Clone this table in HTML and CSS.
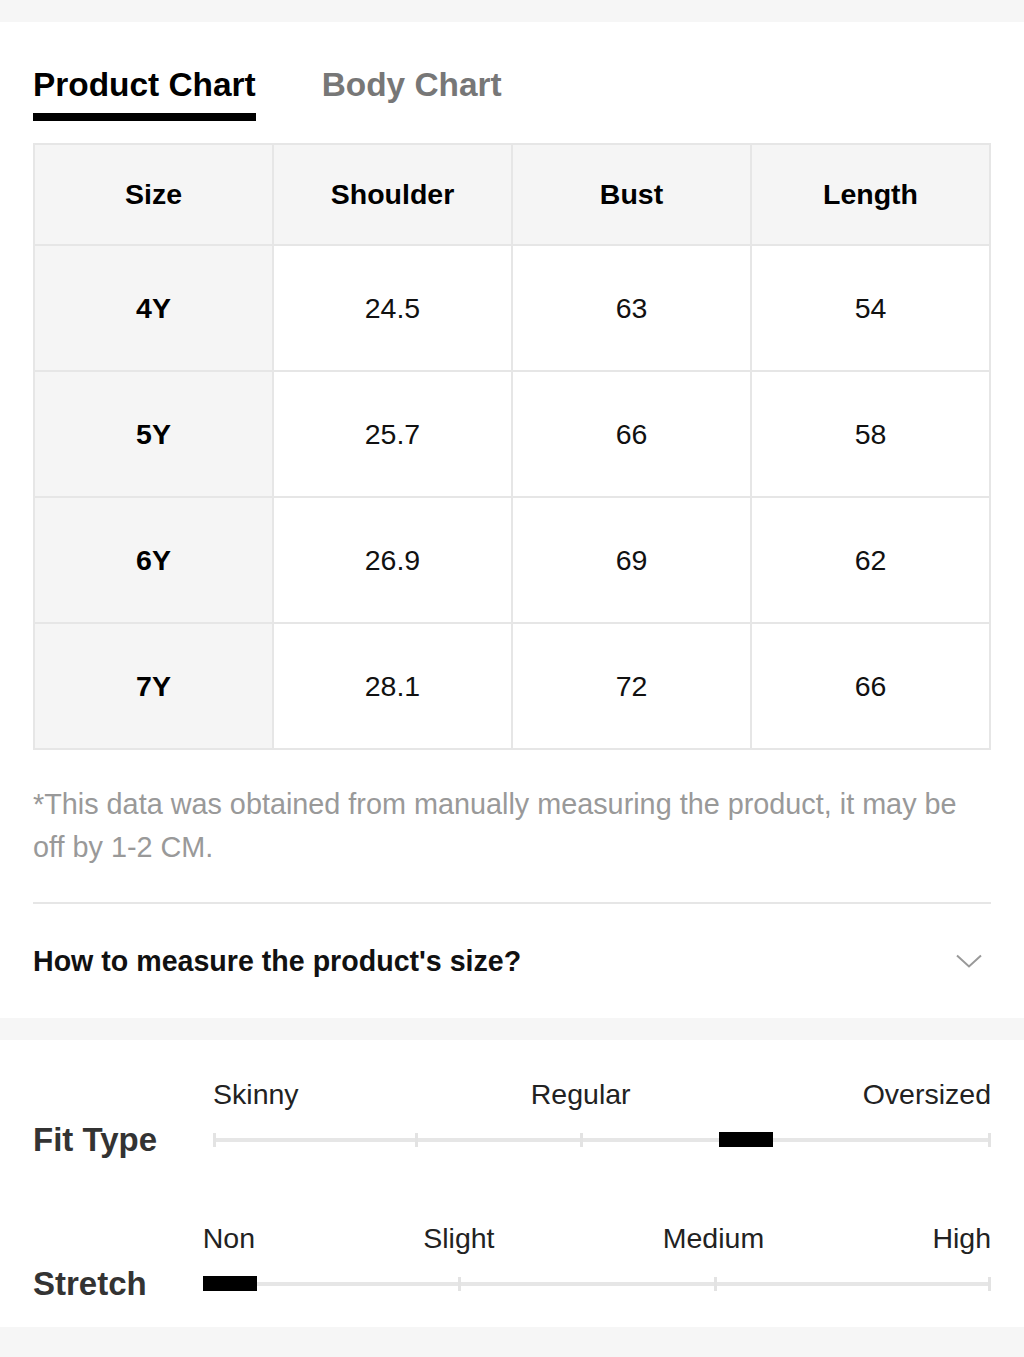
FILE: index.html
```html
<!DOCTYPE html>
<html lang="en">
<head>
<meta charset="utf-8">
<title>Size chart</title>
<link rel="stylesheet" href="styles.css">
</head>
<body>
<div class="band band-top"></div>
<section class="card">
  <div class="tabs">
    <div class="tab tab-active">Product Chart</div>
    <div class="tab">Body Chart</div>
  </div>
  <div class="table">
    <div class="cell head">Size</div>
    <div class="cell head">Shoulder</div>
    <div class="cell head">Bust</div>
    <div class="cell head">Length</div>

    <div class="cell size">4Y</div>
    <div class="cell">24.5</div>
    <div class="cell">63</div>
    <div class="cell">54</div>

    <div class="cell size">5Y</div>
    <div class="cell">25.7</div>
    <div class="cell">66</div>
    <div class="cell">58</div>

    <div class="cell size">6Y</div>
    <div class="cell">26.9</div>
    <div class="cell">69</div>
    <div class="cell">62</div>

    <div class="cell size">7Y</div>
    <div class="cell">28.1</div>
    <div class="cell">72</div>
    <div class="cell">66</div>
  </div>
  <p class="note">*This data was obtained from manually measuring the product, it may be off by 1-2 CM.</p>
  <div class="measure">
    <span class="measure-text">How to measure the product's size?</span>
    <svg class="chevron" width="26" height="14" viewBox="0 0 26 14" aria-hidden="true">
      <path d="M1 1.5 L13 12.5 L25 1.5" fill="none" stroke="#999" stroke-width="2"/>
    </svg>
  </div>
</section>
<div class="band band-mid"></div>
<section class="fit">
  <div class="scale">
    <div></div>
    <div class="labels">
      <span>Skinny</span><span>Regular</span><span>Oversized</span>
    </div>
    <div class="scale-title">Fit Type</div>
    <div class="track">
      <div class="bar"></div>
      <span class="tick" style="left:0"></span>
      <span class="tick" style="left:25.9%"></span>
      <span class="tick" style="left:47.2%"></span>
      <span class="tick tick-end"></span>
      <span class="thumb" style="left:506px"></span>
    </div>
  </div>
  <div class="scale scale-stretch">
    <div></div>
    <div class="labels">
      <span>Non</span><span>Slight</span><span>Medium</span><span>High</span>
    </div>
    <div class="scale-title">Stretch</div>
    <div class="track">
      <div class="bar"></div>
      <span class="tick" style="left:32.4%"></span>
      <span class="tick" style="left:64.8%"></span>
      <span class="tick tick-end"></span>
      <span class="thumb" style="left:0"></span>
    </div>
  </div>
</section>
<div class="band band-bottom"></div>
</body>
</html>
```

FILE: styles.css
```css
* {
  box-sizing: border-box;
}

html, body {
  margin: 0;
  padding: 0;
  background: #ffffff;
}

body {
  font-family: "Liberation Sans", Arial, Helvetica, sans-serif;
  color: #000;
  width: 1024px;
}

.band {
  background: #f6f6f6;
}

.band-top {
  height: 22px;
}

.band-mid {
  height: 22px;
}

.band-bottom {
  height: 30px;
}

.card {
  padding: 46px 33px 0;
}

.tabs {
  display: flex;
  gap: 66px;
}

.tab {
  font-size: 33.4px;
  font-weight: 700;
  line-height: 33px;
  color: #777;
  padding-bottom: 12px;
  border-bottom: 8px solid transparent;
}

.tab-active {
  color: #000;
  border-bottom-color: #000;
}

.table {
  margin-top: 22px;
  display: grid;
  grid-template-columns: repeat(4, 1fr);
  border-top: 2px solid #e6e6e6;
  border-left: 2px solid #e6e6e6;
}

.cell {
  height: 126px;
  border-right: 2px solid #e6e6e6;
  border-bottom: 2px solid #e6e6e6;
  display: flex;
  align-items: center;
  justify-content: center;
  font-size: 28.5px;
  color: #111;
}

.cell.head {
  height: 101px;
  background: #f5f5f5;
  font-weight: 700;
  color: #000;
}

.cell.size {
  background: #f5f5f5;
  font-weight: 700;
  color: #000;
}

.note {
  margin: 33px 0 33px;
  font-size: 28.8px;
  line-height: 43px;
  color: #999;
}

.measure {
  height: 116px;
  border-top: 2px solid #e6e6e6;
  display: flex;
  align-items: center;
  justify-content: space-between;
}

.measure-text {
  font-size: 28.6px;
  font-weight: 700;
  color: #111;
}

.chevron {
  margin-right: 9px;
}

.fit {
  padding: 37px 33px 31px;
}

.scale {
  display: grid;
  grid-template-columns: auto 1fr;
  column-gap: 56px;
  row-gap: 17px;
  align-items: center;
}

.scale-stretch {
  margin-top: 69px;
}

.labels {
  display: flex;
  justify-content: space-between;
  font-size: 28.5px;
  line-height: 34px;
  color: #222;
}

.scale-title {
  font-size: 33px;
  font-weight: 700;
  line-height: 24px;
  color: #333;
}

.track {
  position: relative;
  height: 24px;
  display: flex;
  align-items: center;
}

.bar {
  width: 100%;
  height: 4px;
  background: #e6e6e6;
}

.tick {
  position: absolute;
  top: 5px;
  width: 3px;
  height: 14px;
  background: #e3e3e3;
}

.tick-end {
  right: 0;
}

.thumb {
  position: absolute;
  top: 4px;
  width: 54px;
  height: 15px;
  background: #000;
}
```
